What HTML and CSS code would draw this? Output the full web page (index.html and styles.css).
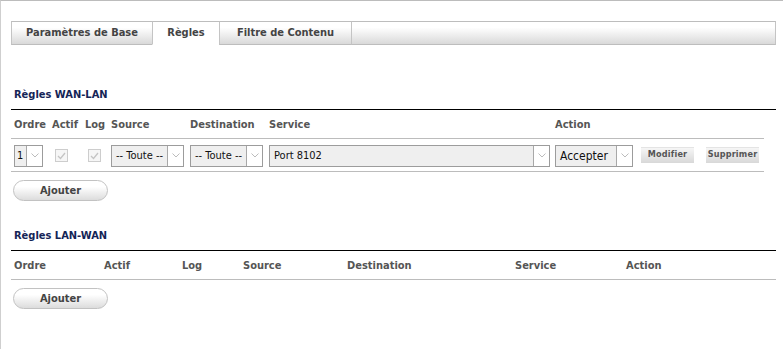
FILE: index.html
```html
<!DOCTYPE html>
<html lang="fr">
<head>
<meta charset="utf-8">
<title>Règles</title>
<link rel="stylesheet" href="styles.css">
</head>
<body>
<div class="tabs">
  <div class="tab t1">Paramètres de Base</div>
  <div class="tab t2 active">Règles</div>
  <div class="tab t3">Filtre de Contenu</div>
  <div class="tab rest"></div>
</div>

<section class="sec first">
  <h2 class="title">Règles WAN-LAN</h2>
  <div class="row head g1">
    <div>Ordre</div><div>Actif</div><div>Log</div><div>Source</div><div>Destination</div><div>Service</div><div>Action</div><div></div><div></div><div class="nb"></div>
  </div>
  <div class="row data g1">
    <div><span class="sel w-ord"><span class="val">1</span><span class="arr"><svg width="8" height="5" viewBox="0 0 8 5"><polyline points="0.5,0.5 4,4 7.5,0.5" fill="none" stroke="#bcbcbc" stroke-width="1"/></svg></span></span></div>
    <div><span class="cb"><svg width="9" height="8" viewBox="0 0 9 8"><polyline points="1,4 3.5,6.5 8,1" fill="none" stroke="#c4c4c4" stroke-width="1.3"/></svg></span></div>
    <div><span class="cb"><svg width="9" height="8" viewBox="0 0 9 8"><polyline points="1,4 3.5,6.5 8,1" fill="none" stroke="#c4c4c4" stroke-width="1.3"/></svg></span></div>
    <div><span class="sel w-src"><span class="val">-- Toute --</span><span class="arr"><svg width="8" height="5" viewBox="0 0 8 5"><polyline points="0.5,0.5 4,4 7.5,0.5" fill="none" stroke="#bcbcbc" stroke-width="1"/></svg></span></span></div>
    <div><span class="sel w-src"><span class="val">-- Toute --</span><span class="arr"><svg width="8" height="5" viewBox="0 0 8 5"><polyline points="0.5,0.5 4,4 7.5,0.5" fill="none" stroke="#bcbcbc" stroke-width="1"/></svg></span></span></div>
    <div><span class="sel w-svc"><span class="val">Port 8102</span><span class="arr"><svg width="8" height="5" viewBox="0 0 8 5"><polyline points="0.5,0.5 4,4 7.5,0.5" fill="none" stroke="#bcbcbc" stroke-width="1"/></svg></span></span></div>
    <div><span class="sel w-act"><span class="val">Accepter</span><span class="arr"><svg width="8" height="5" viewBox="0 0 8 5"><polyline points="0.5,0.5 4,4 7.5,0.5" fill="none" stroke="#bcbcbc" stroke-width="1"/></svg></span></span></div>
    <div><span class="sbtn">Modifier</span></div>
    <div><span class="sbtn sup">Supprimer</span></div>
    <div class="nb"></div>
  </div>
  <button class="add">Ajouter</button>
</section>

<section class="sec second">
  <h2 class="title">Règles LAN-WAN</h2>
  <div class="row head g2">
    <div>Ordre</div><div>Actif</div><div>Log</div><div>Source</div><div>Destination</div><div>Service</div><div>Action</div>
  </div>
  <button class="add">Ajouter</button>
</section>
</body>
</html>
```

FILE: styles.css
```css
html, body {
  margin: 0;
  padding: 0;
  background: #fff;
}
body {
  height: 349px;
  border-top: 1px solid #bcbcbc;
  border-left: 1px solid #cfcfcf;
  padding-top: 20px;
  box-sizing: border-box;
  font-family: "DejaVu Sans Condensed", "DejaVu Sans", sans-serif;
  font-size: 11px;
  color: #222;
}
.tabs {
  display: flex;
  margin-left: 10px;
  width: 765px;
}
.tab {
  box-sizing: border-box;
  height: 24px;
  border-top: 1px solid #bdbdbd;
  border-left: 1px solid #c4c4c4;
  border-bottom: 1px solid #bdbdbd;
  background: linear-gradient(#ffffff 25%, #d9d9d9);
  font-weight: bold;
  color: #444;
  line-height: 22px;
  text-align: center;
}
.t1 { width: 141px; }
.t2 { width: 67px; }
.t3 { width: 132px; }
.rest { flex: 1; border-right: 1px solid #c4c4c4; }
.tab.active {
  background: #fff;
  border-bottom-color: #fff;
}

.sec {
  margin-left: 10px;
  width: 765px;
}
.title {
  margin: 0;
  padding: 0 3px 7px;
  line-height: 14px;
  font-size: 11px;
  font-weight: bold;
  color: #142456;
  border-bottom: 1px solid #000;
}
.first .title { margin-top: 43px; }
.second .title { margin-top: 28px; }

.row {
  display: grid;
  align-items: center;
}
.g1 {
  grid-template-columns: 38px 33px 26px 79px 79px 286px 86px 64px 62px 12px;
}
.g2 {
  grid-template-columns: 90px 78px 61px 104px 168px 111px 153px;
}
.row > div {
  box-sizing: border-box;
  padding-left: 3px;
  height: 100%;
  display: flex;
  align-items: center;
  border-bottom: 1px solid #bcbcbc;
}
.row > div.nb { border-bottom: 0; }
.head { height: 29px; }
.head > div {
  font-weight: bold;
  color: #555;
}
.data { height: 33px; }
.data > div { padding-top: 1px; }

.sel {
  box-sizing: border-box;
  display: flex;
  height: 22px;
  border: 1px solid #9c9c9c;
  background: #efefef;
  color: #111;
  overflow: hidden;
}
.sel .val {
  flex: 1;
  padding-left: 4px;
  line-height: 20px;
  white-space: nowrap;
  overflow: hidden;
}
.sel .arr {
  flex: none;
  width: 16px;
  box-sizing: border-box;
  border-left: 1px solid #a8a8a8;
  background: #fff;
  display: flex;
  align-items: center;
  justify-content: center;
}
.w-ord { width: 29px; }
.w-ord .val { padding-left: 2px; }
.w-src { width: 73px; }
.w-svc { width: 281px; }
.w-act { width: 78px; font-size: 12px; }

.cb {
  box-sizing: border-box;
  margin-left: 3px;
  width: 13px;
  height: 13px;
  border: 1px solid #cdcdcd;
  background: #f6f6f6;
  display: flex;
  align-items: center;
  justify-content: center;
}

.sbtn {
  box-sizing: border-box;
  display: inline-block;
  width: 53px;
  height: 16px;
  margin-top: -2px;
  border-top: 1px solid #e4e4e4;
  background: linear-gradient(#f6f6f6, #d8d8d8);
  color: #555;
  font-weight: bold;
  font-size: 9px;
  line-height: 13px;
  text-align: center;
  letter-spacing: 0.2px;
}
.sup { margin-left: 1px; }

.add {
  display: block;
  box-sizing: border-box;
  margin: 8px 0 0 2px;
  width: 95px;
  height: 21px;
  border: 1px solid #c2c2c2;
  border-radius: 11px;
  background: linear-gradient(#ffffff 30%, #dcdcdc);
  font-family: "DejaVu Sans Condensed", "DejaVu Sans", sans-serif;
  font-size: 11px;
  font-weight: bold;
  color: #444;
  padding: 0;
  line-height: 18px;
}
```
